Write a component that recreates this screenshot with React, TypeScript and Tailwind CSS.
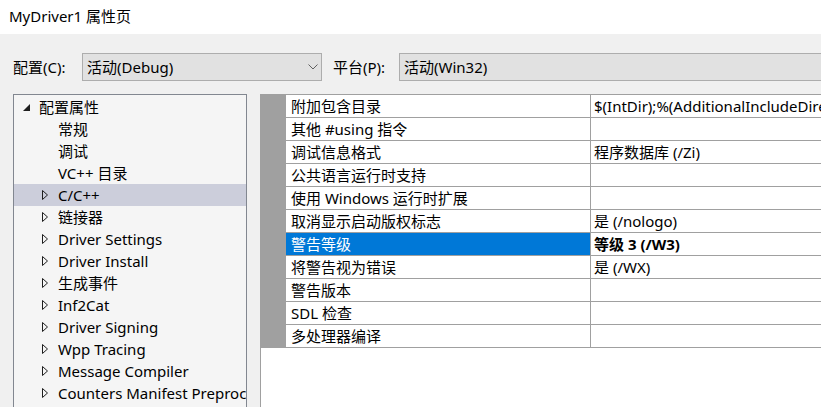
import React from "react";

const font = {
  fontFamily: '"Segoe UI", "Noto Sans", "Noto Sans CJK SC", sans-serif',
};

const treeItems = [
  { label: "配置属性", level: 0, expanded: true },
  { label: "常规", level: 1, leaf: true },
  { label: "调试", level: 1, leaf: true },
  { label: "VC++ 目录", level: 1, leaf: true },
  { label: "C/C++", level: 1, selected: true },
  { label: "链接器", level: 1 },
  { label: "Driver Settings", level: 1 },
  { label: "Driver Install", level: 1 },
  { label: "生成事件", level: 1 },
  { label: "Inf2Cat", level: 1 },
  { label: "Driver Signing", level: 1 },
  { label: "Wpp Tracing", level: 1 },
  { label: "Message Compiler", level: 1 },
  { label: "Counters Manifest Preprocessor", level: 1 },
];

const props = [
  { name: "附加包含目录", value: "$(IntDir);%(AdditionalIncludeDirectories)" },
  { name: "其他 #using 指令", value: "" },
  { name: "调试信息格式", value: "程序数据库 (/Zi)" },
  { name: "公共语言运行时支持", value: "" },
  { name: "使用 Windows 运行时扩展", value: "" },
  { name: "取消显示启动版权标志", value: "是 (/nologo)" },
  { name: "警告等级", value: "等级 3 (/W3)", selected: true },
  { name: "将警告视为错误", value: "是 (/WX)" },
  { name: "警告版本", value: "" },
  { name: "SDL 检查", value: "" },
  { name: "多处理器编译", value: "" },
];

const Chevron = () => (
  <svg width="10" height="6" viewBox="0 0 10 6" className="text-[#606060]">
    <path d="M0.5 0.5 L5 5 L9.5 0.5" fill="none" stroke="currentColor" strokeWidth="1" />
  </svg>
);

export default function App() {
  return (
    <div style={font} className="w-[821px] h-[407px] overflow-hidden bg-[#f0f0f0] text-black">
      <div className="h-[34px] bg-white flex items-center pl-[9px] text-[15px] pb-[2px]">
        MyDriver1 属性页
      </div>

      <div className="flex items-center mt-[19px] h-[28px]">
        <span className="ml-[13px] w-[69px] text-[15px]">配置(C):</span>
        <div className="w-[240px] h-[28px] border border-[#adadad] bg-[#e1e1e1] flex items-center pl-[4px] pr-[3px]">
          <span className="flex-1 text-[15px]">活动(Debug)</span>
          <Chevron />
        </div>
        <span className="ml-[11px] w-[66px] text-[15px]">平台(P):</span>
        <div className="flex-1 h-[28px] border border-r-0 border-[#adadad] bg-[#e1e1e1] flex items-center pl-[4px]">
          <span className="text-[15px]">活动(Win32)</span>
        </div>
      </div>

      <div className="flex mt-[13px] h-[313px]">
        <div className="ml-[13px] w-[234px] shrink-0 border border-b-0 border-[#828790] bg-[#f5f5f5] pt-[1px] overflow-hidden">
          {treeItems.map((t, i) => (
            <div
              key={i}
              className={`h-[22px] flex items-center whitespace-nowrap text-[15px] ${
                t.selected ? "bg-[#cccedb]" : ""
              }`}
            >
              {t.level === 0 ? (
                <span className="w-[25px] shrink-0 pl-[9px] flex">
                  <svg width="7" height="7" viewBox="0 0 7 7">
                    <path d="M7 0 L7 7 L0 7 Z" fill="#1e1e1e" />
                  </svg>
                </span>
              ) : (
                <span className="w-[44px] shrink-0 pl-[28px] flex">
                  {!t.leaf && (
                    <svg width="6" height="10" viewBox="0 0 6 10">
                      <path d="M0.5 0.5 L5.5 5 L0.5 9.5 Z" fill="none" stroke="#1e1e1e" strokeWidth="1" />
                    </svg>
                  )}
                </span>
              )}
              <span>{t.label}</span>
            </div>
          ))}
        </div>

        <div className="ml-[13px] flex-1 bg-white border-l border-[#a0a0a0] overflow-hidden">
          <div className="border-t border-[#a0a0a0]">
            {props.map((p, i) => (
              <div key={i} className="flex h-[23px] text-[15px]">
                <div className="w-[25px] shrink-0 bg-[#a0a0a0]" />
                <div
                  className={`w-[305px] shrink-0 border-r border-b border-[#a0a0a0] pl-[5px] flex items-center whitespace-nowrap ${
                    p.selected ? "bg-[#0078d7] text-white" : ""
                  }`}
                >
                  {p.name}
                </div>
                <div
                  className={`flex-1 border-b border-[#a0a0a0] pl-[3px] flex items-center whitespace-nowrap overflow-hidden ${
                    p.selected ? "font-bold" : ""
                  }`}
                >
                  {p.value}
                </div>
              </div>
            ))}
          </div>
        </div>
      </div>
    </div>
  );
}
